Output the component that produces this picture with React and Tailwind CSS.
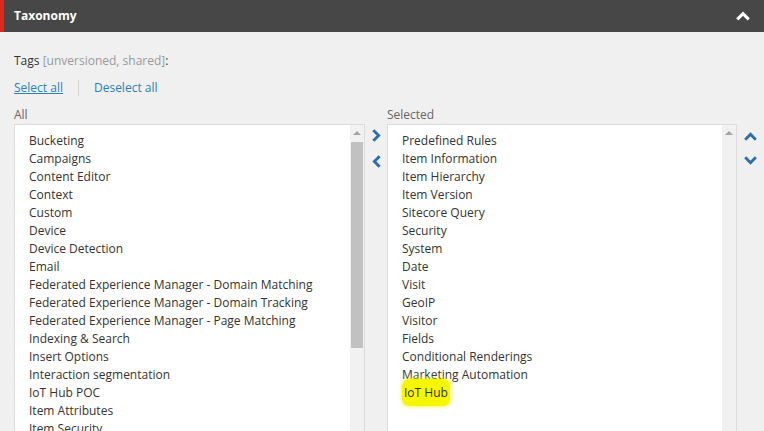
import React from "react";

const allItems = [
  "Bucketing",
  "Campaigns",
  "Content Editor",
  "Context",
  "Custom",
  "Device",
  "Device Detection",
  "Email",
  "Federated Experience Manager - Domain Matching",
  "Federated Experience Manager - Domain Tracking",
  "Federated Experience Manager - Page Matching",
  "Indexing & Search",
  "Insert Options",
  "Interaction segmentation",
  "IoT Hub POC",
  "Item Attributes",
  "Item Security",
];

const selectedItems = [
  "Predefined Rules",
  "Item Information",
  "Item Hierarchy",
  "Item Version",
  "Sitecore Query",
  "Security",
  "System",
  "Date",
  "Visit",
  "GeoIP",
  "Visitor",
  "Fields",
  "Conditional Renderings",
  "Marketing Automation",
];

function Chevron({ dir, className }) {
  const paths = {
    up: "M2 8 L6 4 L10 8",
    down: "M2 4 L6 8 L10 4",
    left: "M8 2 L4 6 L8 10",
    right: "M4 2 L8 6 L4 10",
  };
  return (
    <svg viewBox="0 0 12 12" className={className} fill="none">
      <path d={paths[dir]} stroke="currentColor" strokeWidth="2.6" strokeLinecap="square" />
    </svg>
  );
}

function FakeScrollbar({ thumb }) {
  return (
    <div className="w-[14px] shrink-0 bg-[#f1f1f1] flex flex-col items-center">
      <div className="h-[15px] flex items-center justify-center">
        <div className="w-0 h-0 border-l-[4px] border-r-[4px] border-b-[4px] border-l-transparent border-r-transparent border-b-[#a3a3a3]" />
      </div>
      {thumb && <div className="w-[12px] h-[206px] bg-[#c1c1c1] mt-[2px]" />}
    </div>
  );
}

export default function App() {
  return (
    <div
      className="w-[764px] h-[431px] overflow-hidden bg-[#f0f0f0] text-[12px] text-[#333333]"
      style={{ fontFamily: '"Open Sans", "Liberation Sans", sans-serif' }}
    >
      {/* Header */}
      <div className="h-[32px] bg-[#474747] border-l-4 border-[#dc291e] flex items-center justify-between pl-[10px] pr-[14px]">
        <span className="text-white font-bold text-[12px]">Taxonomy</span>
        <Chevron dir="up" className="w-[14px] h-[14px] text-white" />
      </div>

      <div className="pl-[14px]">
        <div className="mt-[20px] h-[18px] leading-[18px]">
          Tags <span className="text-[#999999]">[unversioned, shared]</span>:
        </div>

        <div className="mt-[9px] flex items-center h-[18px] leading-[18px]">
          <a className="text-[#2a80b9] underline">Select all</a>
          <span className="mx-[15px] w-px h-[16px] bg-[#d4d4d4]" />
          <a className="text-[#2a80b9]">Deselect all</a>
        </div>

        <div className="mt-[9px] flex">
          {/* All */}
          <div className="w-[351px] shrink-0 flex flex-col">
            <div className="h-[18px] leading-[18px] text-[#666666]">All</div>
            <div className="h-[320px] bg-white border border-[#dcdcdc] flex">
              <div className="flex-1 min-w-0 pl-[14px] pt-[7px] overflow-hidden">
                {allItems.map((item) => (
                  <div key={item} className="h-[18px] leading-[18px] whitespace-nowrap">
                    {item}
                  </div>
                ))}
              </div>
              <FakeScrollbar thumb />
            </div>
          </div>

          {/* Move arrows */}
          <div className="w-[22px] shrink-0 flex flex-col items-center pt-[23px] gap-[13px] text-[#2b6cb0]">
            <Chevron dir="right" className="w-[13px] h-[13px]" />
            <Chevron dir="left" className="w-[13px] h-[13px]" />
          </div>

          {/* Selected */}
          <div className="w-[350px] shrink-0 flex flex-col">
            <div className="h-[18px] leading-[18px] text-[#666666]">Selected</div>
            <div className="h-[320px] bg-white border border-[#dcdcdc] flex">
              <div className="flex-1 min-w-0 pl-[14px] pt-[7px] overflow-hidden">
                {selectedItems.map((item) => (
                  <div key={item} className="h-[18px] leading-[18px] whitespace-nowrap">
                    {item}
                  </div>
                ))}
                <div className="h-[18px] leading-[18px]">
                  <span className="bg-[#f6f600] rounded-[7px] px-[2px] py-[5px] shadow-[0_0_4px_#f6f600]">IoT Hub</span>
                </div>
              </div>
              <FakeScrollbar />
            </div>
          </div>

          {/* Order arrows */}
          <div className="w-[27px] shrink-0 flex flex-col items-center pt-[24px] gap-[11px] text-[#2b6cb0]">
            <Chevron dir="up" className="w-[13px] h-[13px]" />
            <Chevron dir="down" className="w-[13px] h-[13px]" />
          </div>
        </div>
      </div>
    </div>
  );
}
